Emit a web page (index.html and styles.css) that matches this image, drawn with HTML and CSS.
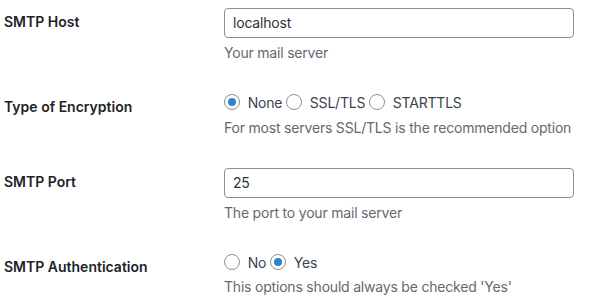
FILE: index.html
```html
<!DOCTYPE html>
<html lang="en">
<head>
    <meta charset="UTF-8">
    <meta name="viewport" content="width=device-width, initial-scale=1.0">
    <title>SMTP Settings</title>
    <link rel="stylesheet" href="styles.css">
</head>
<body>
    <table class="form-table">
        <tbody>
            <tr>
                <th scope="row"><label for="smtp-host">SMTP Host</label></th>
                <td>
                    <input type="text" id="smtp-host" class="regular-text" value="localhost">
                    <p class="description">Your mail server</p>
                </td>
            </tr>
            <tr>
                <th scope="row">Type of Encryption</th>
                <td>
                    <fieldset>
                        <label><input type="radio" name="encryption" value="none" checked> None</label>
                        <label><input type="radio" name="encryption" value="ssl"> SSL/TLS</label>
                        <label><input type="radio" name="encryption" value="tls"> STARTTLS</label>
                    </fieldset>
                    <p class="description">For most servers SSL/TLS is the recommended option</p>
                </td>
            </tr>
            <tr>
                <th scope="row"><label for="smtp-port">SMTP Port</label></th>
                <td>
                    <input type="text" id="smtp-port" class="regular-text" value="25">
                    <p class="description">The port to your mail server</p>
                </td>
            </tr>
            <tr>
                <th scope="row">SMTP Authentication</th>
                <td>
                    <fieldset>
                        <label><input type="radio" name="auth" value="no"> No</label>
                        <label><input type="radio" name="auth" value="yes" checked> Yes</label>
                    </fieldset>
                    <p class="description">This options should always be checked 'Yes'</p>
                </td>
            </tr>
        </tbody>
    </table>
</body>
</html>
```

FILE: styles.css
```css
body {
    background-color: #fff;
    color: #3c434a;
    font-family: Inter, "Noto Sans", sans-serif;
    font-size: 14px;
    line-height: 1.4em;
    margin: 0;
    padding: 0 0 0 4px;
}
.form-table {
    border-collapse: collapse;
    margin-top: -7px;
    width: 100%;
}
.form-table th {
    color: #1d2327;
    font-weight: 600;
    line-height: 1.3;
    padding: 20px 10px 20px 0;
    text-align: left;
    vertical-align: top;
    width: 200px;
}
.form-table td {
    letter-spacing: -0.2px;
    line-height: 1.3;
    padding: 15px 10px;
    vertical-align: top;
    white-space: nowrap;
}
.regular-text {
    background-color: #fff;
    border: 1px solid #8c8f94;
    border-radius: 4px;
    box-sizing: border-box;
    color: #2c3338;
    font-family: inherit;
    font-size: 14px;
    letter-spacing: -0.2px;
    line-height: 2;
    margin: 0;
    min-height: 30px;
    padding: 0 8px;
    width: 350px;
}
fieldset {
    border: 0;
    margin: 0;
    padding: 0;
}
fieldset label {
    display: inline-block;
    line-height: 1.4;
    margin: 0;
    color: #3c434a;
}
input[type="radio"] {
    appearance: none;
    background: #fff;
    border: 1px solid #8c8f94;
    border-radius: 50%;
    box-sizing: border-box;
    display: inline-block;
    height: 16px;
    margin: -4px 4px 0 0;
    position: relative;
    vertical-align: middle;
    width: 16px;
}
input[type="radio"]:checked::before {
    background-color: #3582c4;
    border-radius: 50%;
    content: "";
    height: 8px;
    left: 3px;
    position: absolute;
    top: 3px;
    width: 8px;
}
.description {
    color: #646970;
    line-height: 1.5;
    margin: 4px 0 0;
}
```
